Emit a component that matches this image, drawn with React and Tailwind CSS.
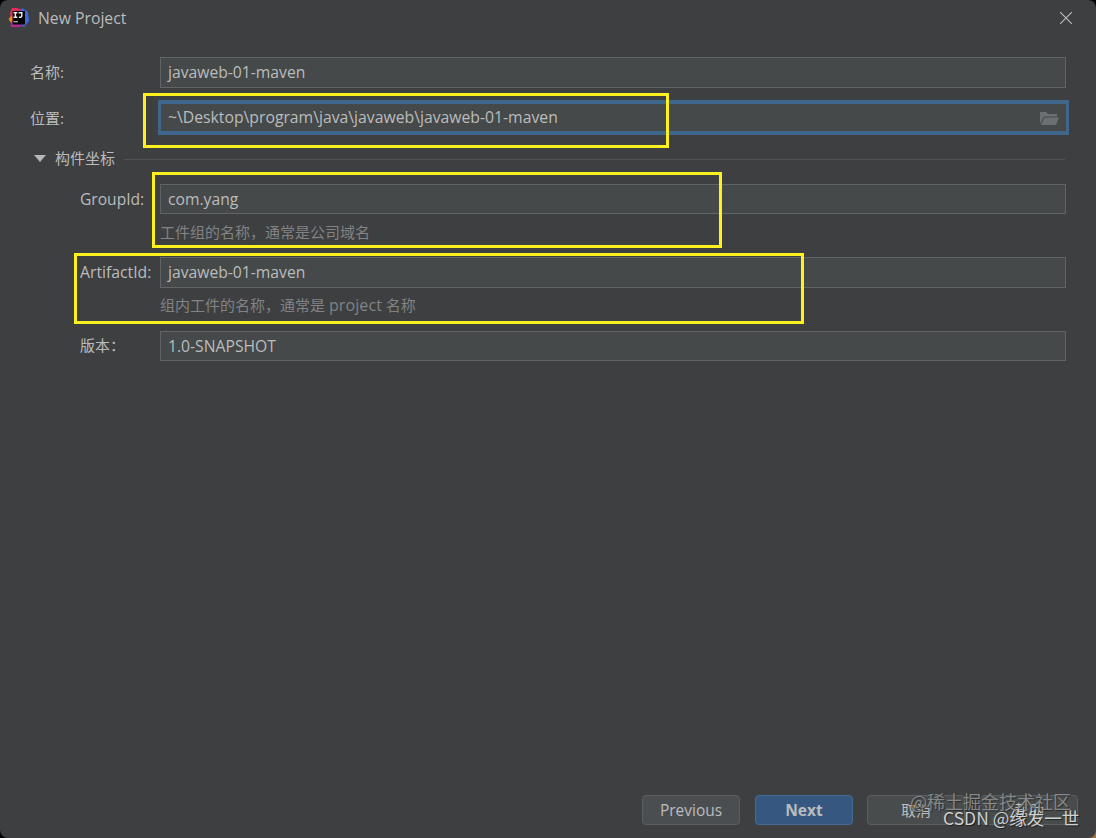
import React from 'react';

const Field = ({ value, className = '' }) => (
  <div className={`flex items-center w-[906px] border border-[#606466] bg-[#454949] px-[7px] ${className}`}>
    <span className="pb-px text-[15.7px]">{value}</span>
  </div>
);

const DialogButton = ({ children, className = '' }) => (
  <button className={`flex h-[30px] w-[98px] items-center justify-center rounded-[4px] border ${className}`}>
    {children}
  </button>
);

const IdeaLogo = () => (
  <svg width="22" height="22" viewBox="0 0 22 22">
    <path d="M2 6 4 1 9 1 14 3 12 11 3 14Z" fill="#e52b5b" />
    <path d="M0.5 12 4 8 7 15 3 16Z" fill="#f4812c" />
    <path d="M12 4 14 1 20 5 21 14 16 20 11 18Z" fill="#3f68dd" />
    <path d="M2.5 19 4 14 15 18 12 20 4 20Z" fill="#b52c91" />
    <rect x="4.5" y="4" width="12.5" height="13.5" fill="#050407" />
    <path d="M5.5 5.7h3.8M7.4 5.7v4.8M5.5 10.3h3.8M10.6 5.7h3.2v3c0 1.4-1 1.9-2.9 1.4" fill="none" stroke="#eee" strokeWidth="1.4" />
    <path d="M5.5 14.8h4.5" stroke="#ddd" strokeWidth="1" />
  </svg>
);

const FolderIcon = () => (
  <svg width="19" height="14" viewBox="0 0 19 14" fill="#6c7071">
    <path d="M0 12V0h6l2 2h9v2.500H4L0 12Z" />
    <path d="M4.500 5.500H19L16 13H1Z" />
  </svg>
);

const App = () => {
  return (
    <div className="relative h-[838px] w-[1096px] overflow-hidden bg-gradient-to-br from-black from-60% to-[#9a7439] font-['Open_Sans','Noto_Sans_CJK_SC',sans-serif] text-[15px] leading-[20px] text-[#bbbcbd]">
      <div className="flex h-full flex-col rounded-[8px] bg-[#3d3f41]">
        {/* Title bar */}
        <div className="flex h-[36px] shrink-0 items-center justify-between pl-[8px] pr-[24px]">
          <div className="flex items-center gap-[8px]">
            <IdeaLogo />
            <span className="text-[15.75px]">New Project</span>
          </div>
          <svg width="12" height="12" viewBox="0 0 12 12" stroke="#bcbdbd" strokeWidth="1.1">
            <path d="M0 0 12 12M12 0 0 12" />
          </svg>
        </div>

        {/* Form */}
        <div className="flex flex-col pt-[21px]">
          <div className="flex h-[31px] items-center">
            <label className="w-[160px] pb-[2px] pl-[30px]">名称:</label>
            <Field value="javaweb-01-maven" className="h-[31px]" />
          </div>

          <div className="mt-[12px] flex h-[35px] items-center">
            <label className="w-[158px] pl-[30px]">位置:</label>
            <div className="flex h-[35px] w-[911px] items-center justify-between border-x-[3px] border-y-[4px] border-[#3f668b] bg-[#454949] pl-[7px] pr-[7px]">
              <span className="pb-px text-[15.75px]">~\Desktop\program\java\javaweb\javaweb-01-maven</span>
              <div className="pt-[2px]">
                <FolderIcon />
              </div>
            </div>
          </div>

          <div className="mt-[13px] flex h-[20px] items-center pl-[34px]">
            <svg width="12" height="7" viewBox="0 0 12 7" fill="#b5b6b7">
              <path d="M0 0h12L6 7Z" />
            </svg>
            <span className="ml-[9px]">构件坐标</span>
            <span className="ml-[9px] mt-[2px] h-px w-[941px] bg-[#515354]" />
          </div>

          <div className="mt-[16px] flex h-[30px] items-center">
            <label className="w-[160px] pb-px pl-[80px] text-[15.6px]">GroupId:</label>
            <Field value="com.yang" className="h-[30px]" />
          </div>
          <p className="mt-[8px] h-[20px] pl-[160px] text-[#818384]">工件组的名称，通常是公司域名</p>

          <div className="mt-[15px] flex h-[31px] items-center">
            <label className="w-[160px] pb-px pl-[80px] text-[15.75px]">ArtifactId:</label>
            <Field value="javaweb-01-maven" className="h-[31px]" />
          </div>
          <p className="mt-[7px] h-[20px] pl-[160px] text-[#818384]">
            组内工件的名称，通常是 <span className="text-[16px] tracking-[0.1px]">project</span> 名称
          </p>

          <div className="mt-[16px] flex h-[30px] items-center">
            <label className="w-[160px] pb-[2px] pl-[80px]">版本：</label>
            <Field value="1.0-SNAPSHOT" className="h-[30px]" />
          </div>
        </div>

        {/* Footer */}
        <div className="mb-[13px] mt-auto flex justify-end gap-[15px] pr-[18px]">
          <DialogButton className="border-[#5b5f60] bg-[#4a4e50] text-[15.5px]">Previous</DialogButton>
          <DialogButton className="-mr-px border-[#436b95] bg-[#365880] text-[15.5px] font-bold">Next</DialogButton>
          <DialogButton className="border-[#5b5f60] bg-[#484c4d]">取消</DialogButton>
          <DialogButton className="border-[#5b5f60] bg-[#484c4d]">帮助</DialogButton>
        </div>
      </div>

      {/* Highlight boxes */}
      <div className="absolute left-[143px] top-[93px] h-[55px] w-[526px] border-[3px] border-[#fff01f]" />
      <div className="absolute left-[152px] top-[172px] h-[76px] w-[570px] border-[3px] border-[#fff01f]" />
      <div className="absolute left-[74px] top-[253px] h-[71px] w-[730px] border-[3px] border-[#fff01f]" />

      {/* Watermarks */}
      <span className="absolute left-[910px] top-[790px] whitespace-nowrap font-['Noto_Sans_CJK_SC',sans-serif] text-[18px] leading-[22px] text-[#858788] [text-shadow:1px_1px_1px_#2a2c2d]">
        @稀土掘金技术社区
      </span>
      <span className="absolute left-[943px] top-[807px] whitespace-nowrap font-['Noto_Sans_CJK_SC',sans-serif] text-[17.5px] leading-[22px] text-[#d0d1d2] [text-shadow:1px_1px_1px_#222]">
        CSDN @缘发一世
      </span>
    </div>
  );
};

export default App;
